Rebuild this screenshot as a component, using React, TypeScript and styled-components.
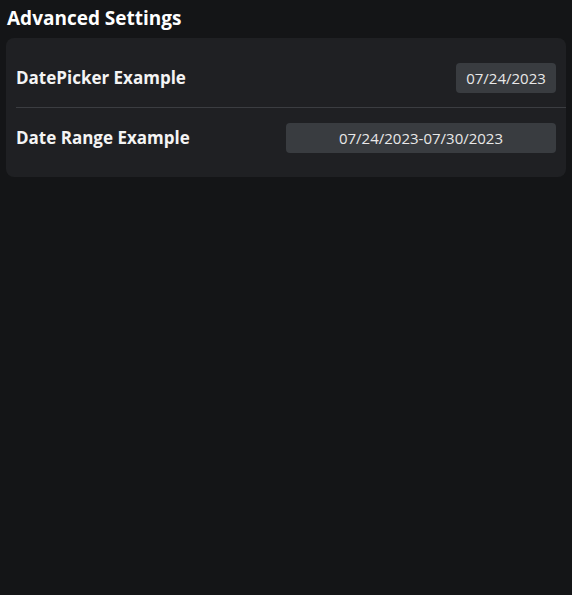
import React from "react";
import styled, { createGlobalStyle } from "styled-components";

const GlobalStyle = createGlobalStyle`
  html, body {
    margin: 0;
    padding: 0;
    background: #141517;
  }
  body {
    font-family: "Open Sans", "Noto Sans", "Liberation Sans", sans-serif;
    color: #f1f1f1;
  }
`;

const App = () => {
  return (
    <>
      <GlobalStyle />
      <Page>
        <Title>Advanced Settings</Title>
        <Card>
          <Row>
            <Label>DatePicker Example</Label>
            <DateField width={100}>07/24/2023</DateField>
          </Row>
          <Row>
            <Label>Date Range Example</Label>
            <DateField width={270}>07/24/2023-07/30/2023</DateField>
          </Row>
        </Card>
      </Page>
    </>
  );
};

export default App;

const Page = styled.div`
  display: flex;
  flex-direction: column;
  padding: 4px 6px 0 6px;
  min-height: 591px;
`;

const Title = styled.h1`
  margin: 0 0 0 1px;
  font-size: 19px;
  font-weight: 700;
  line-height: 28px;
  color: #ffffff;
`;

const Card = styled.section`
  margin-top: 6px;
  background: #1f2023;
  border-radius: 8px;
  padding: 10px 0 10px 10px;
  display: flex;
  flex-direction: column;
`;

const Row = styled.div`
  display: flex;
  align-items: center;
  justify-content: space-between;
  height: 59px;
  padding-right: 10px;
  & + & {
    border-top: 1px solid #3b3d41;
  }
`;

const Label = styled.span`
  font-size: 17px;
  font-weight: 700;
  color: #f4f4f4;
`;

const DateField = styled.div<{ width: number }>`
  width: ${(p) => p.width}px;
  height: 30px;
  box-sizing: border-box;
  display: flex;
  align-items: center;
  justify-content: center;
  background: #393c40;
  border-radius: 4px;
  font-size: 15px;
  color: #e8e8e8;
`;
